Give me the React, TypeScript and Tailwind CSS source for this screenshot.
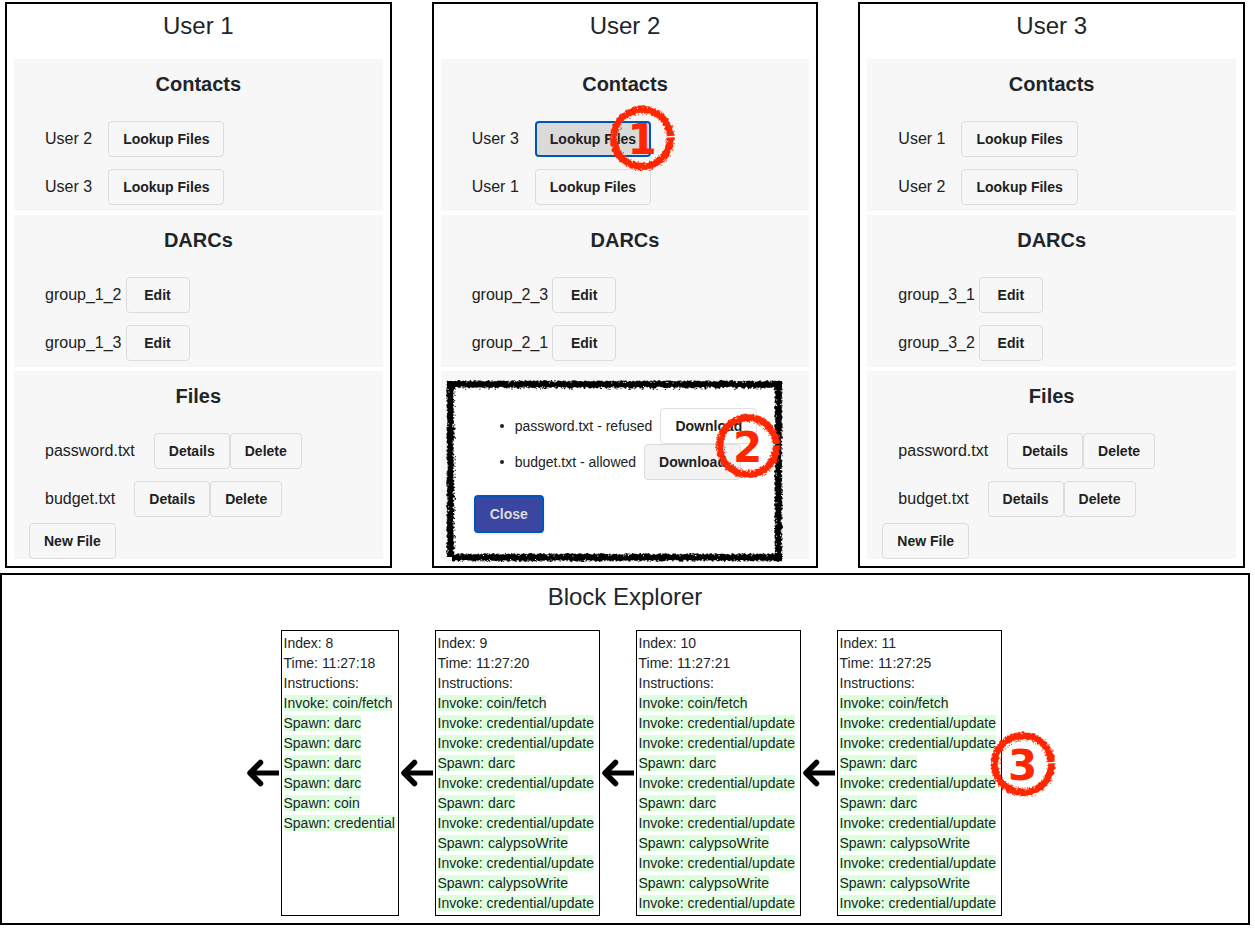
import React from "react";

type Tone = "plain" | "pressed" | "raised" | "shaded" | "primary";

const TONES: Record<Tone, string> = {
  plain: "h-9 border px-3.5 border-[#dcdcdc] bg-transparent text-[#212121]",
  pressed: "h-9 border-2 px-[13px] border-[#0056b8] bg-[#dadada] text-[#212121]",
  raised: "h-9 border px-3.5 border-[#e0e0e0] bg-white text-[#212121]",
  shaded: "h-9 border px-3.5 border-[#dadada] bg-[#f3f3f3] text-[#212121]",
  primary: "h-[38px] border-2 px-3.5 border-[#0056b8] bg-[#3a46a0] text-[#dcdcdc] shadow-sm",
};

function Button({ tone = "plain", children }: { tone?: Tone; children: React.ReactNode }) {
  return (
    <button
      type="button"
      className={`min-w-16 shrink-0 cursor-pointer rounded text-center text-sm font-bold whitespace-nowrap ${TONES[tone]}`}
    >
      {children}
    </button>
  );
}

function createRandom(seed: number) {
  let state = seed;
  return () => {
    state = (state * 1664525 + 1013904223) % 4294967296;
    return state / 4294967296;
  };
}

const fmt = (n: number) => n.toFixed(1);

/* Chalk-like ring: jagged inner and outer edge, with loose grains around it. */
function chalkRing(seed: number) {
  const rnd = createRandom(seed);
  const steps = 150;
  const start = -0.02;
  const sweep = Math.PI * 2 - 0.05;
  const outer: string[] = [];
  const inner: string[] = [];
  const at = (a: number, r: number) => `${fmt(33 + r * Math.cos(a))} ${fmt(33 + r * Math.sin(a))}`;
  for (let i = 0; i <= steps; i++) {
    const a = start + (sweep * i) / steps;
    outer.push(at(a, 31.2 + rnd() * 1.8));
    inner.unshift(at(a, 25.8 - rnd() * 2));
  }
  const grains: string[] = [];
  for (let i = 0; i < 70; i++) {
    const a = start + sweep * rnd();
    const r = rnd() < 0.5 ? 23.2 + rnd() : 32.3 + rnd() * 0.7;
    grains.push(`M${at(a, r)}h1v1h-1z`);
  }
  const chips: string[] = [];
  for (let i = 0; i < 30; i++) {
    const a = start + sweep * rnd();
    const r = rnd() < 0.5 ? 25 + rnd() : 30.5 + rnd();
    chips.push(`M${at(a, r)}v1h1v-1z`);
  }
  return `M${outer.join("L")}L${inner.join("L")}Z${grains.join("")}${chips.join("")}`;
}

/* Charcoal frame built from four rough bands, in a w by h box. */
function charcoalFrame(w: number, h: number) {
  const rnd = createRandom(77);
  const parts: string[] = [];
  const band = (x0: number, y0: number, length: number, vertical: boolean) => {
    const near: string[] = [];
    const far: string[] = [];
    const put = (along: number, across: number) =>
      vertical ? `${fmt(x0 + across)} ${fmt(y0 + along)}` : `${fmt(x0 + along)} ${fmt(y0 + across)}`;
    for (let t = 0; t <= length; t += 1) {
      near.push(put(t, rnd() * 1.9));
      far.unshift(put(t, 9 - rnd() * 2.4));
    }
    const outline = [...near, ...far];
    /* Keep every band wound the same way so that the corners stay filled. */
    if (vertical) outline.reverse();
    parts.push(`M${outline.join("L")}Z`);
    for (let i = 0; i < length / 3; i++) {
      parts.push(`M${put(rnd() * length, rnd() < 0.5 ? rnd() : 8 + rnd())}h1v1h-1z`);
    }
  };
  band(1, 0, w - 2, false);
  band(6, h - 9, w - 7, false);
  band(0, 1, h - 6, true);
  band(w - 9, 1, h - 2, true);
  return parts.join("");
}

function charcoalChips(w: number, h: number) {
  const rnd = createRandom(9);
  const parts: string[] = [];
  for (let i = 0; i < 110; i++) {
    const y = rnd() < 0.5 ? 1 + rnd() * 1.5 : 6 + rnd() * 1.5;
    const offset = rnd() < 0.5 ? 0 : h - 9;
    parts.push(`M${fmt(8 + rnd() * (w - 18))} ${fmt(offset + y)}h1v1h-1z`);
  }
  for (let i = 0; i < 70; i++) {
    const x = rnd() < 0.5 ? 1 + rnd() * 1.5 : 6 + rnd() * 1.5;
    const offset = rnd() < 0.5 ? 0 : w - 9;
    parts.push(`M${fmt(offset + x)} ${fmt(8 + rnd() * (h - 18))}h1v1h-1z`);
  }
  return parts.join("");
}

function Marker({ label, className }: { label: string; className: string }) {
  return (
    <span
      className={`pointer-events-none absolute z-10 flex size-[66px] items-center justify-center pt-1 text-[#ff2600] ${className}`}
    >
      <svg viewBox="0 0 66 66" className="absolute inset-0 size-full" aria-hidden="true">
        <path d={chalkRing(label.charCodeAt(0) * 31)} fill="currentColor" fillRule="evenodd" />
      </svg>
      <span className="relative font-['DejaVu_Sans',sans-serif] text-[42px] leading-none font-bold">{label}</span>
    </span>
  );
}

function Section({ title, grow, children }: { title: string; grow?: boolean; children?: React.ReactNode }) {
  return (
    <section className={`bg-[#f7f7f7] ${grow ? "flex-1" : ""}`}>
      <h3 className="pt-[13px] pb-[19px] text-center text-xl leading-6 font-bold">{title}</h3>
      {children}
    </section>
  );
}

const ROW_GAPS = { tight: "gap-1", normal: "gap-4", wide: "gap-[19px]" };

function Row({
  label,
  spacing = "normal",
  children,
}: {
  label: string;
  spacing?: keyof typeof ROW_GAPS;
  children: React.ReactNode;
}) {
  return (
    <li className={`flex h-12 items-center pl-[31px] text-base text-[#212121] ${ROW_GAPS[spacing]}`}>
      <span>{label}</span>
      <div className="flex">{children}</div>
    </li>
  );
}

function DownloadDialog() {
  return (
    <div
      role="dialog"
      aria-label="Lookup Files"
      className="absolute top-[376px] left-3 w-[337px] bg-white pt-7 pb-[29px] pl-7 text-sm text-[#212121]"
    >
      <svg viewBox="0 0 337 182" preserveAspectRatio="none" className="absolute inset-0 size-full" aria-hidden="true">
        <path d="M0 0H337V182H0ZM4 4V178H333V4Z" fill="#f7f7f7" fillRule="evenodd" />
        <path d={charcoalFrame(337, 182)} fill="#000" />
        <path d={charcoalChips(337, 182)} fill="#fff" />
      </svg>
      <ul className="relative list-disc pl-[41px]">
        <li>
          <span className="inline-flex items-center gap-2 align-middle">
            password.txt - refused <Button tone="raised">Download</Button>
          </span>
        </li>
        <li>
          <span className="inline-flex items-center gap-2 align-middle">
            budget.txt - allowed <Button tone="shaded">Download</Button>
          </span>
        </li>
      </ul>
      <div className="relative mt-[15px] flex">
        <Button tone="primary">Close</Button>
      </div>
      <Marker label="2" className="top-[33px] right-0.5" />
    </div>
  );
}

interface User {
  name: string;
  contacts: string[];
  darcs: string[];
  files: string[];
  lookedUp?: string;
}

const USERS: User[] = [
  { name: "User 1", contacts: ["User 2", "User 3"], darcs: ["group_1_2", "group_1_3"], files: ["password.txt", "budget.txt"] },
  { name: "User 2", contacts: ["User 3", "User 1"], darcs: ["group_2_3", "group_2_1"], files: [], lookedUp: "User 3" },
  { name: "User 3", contacts: ["User 1", "User 2"], darcs: ["group_3_1", "group_3_2"], files: ["password.txt", "budget.txt"] },
];

function UserPanel({ user }: { user: User }) {
  return (
    <article className="relative flex flex-col border-2 border-black px-[7px] pb-[7px]">
      <h2 className="pt-1.5 pb-[17px] text-center text-2xl leading-8">{user.name}</h2>
      <div className="flex flex-1 flex-col gap-1">
        <Section title="Contacts">
          <ul>
            {user.contacts.map((contact) => (
              <Row key={contact} label={contact}>
                {contact === user.lookedUp ? (
                  <div className="relative flex">
                    <Button tone="pressed">Lookup Files</Button>
                    <Marker label="1" className="-top-4 -right-6" />
                  </div>
                ) : (
                  <Button>Lookup Files</Button>
                )}
              </Row>
            ))}
          </ul>
        </Section>
        <Section title="DARCs">
          <ul>
            {user.darcs.map((darc) => (
              <Row key={darc} label={darc} spacing="tight">
                <Button>Edit</Button>
              </Row>
            ))}
          </ul>
        </Section>
        {user.lookedUp ? (
          <div className="flex-1 bg-[#f7f7f7]" />
        ) : (
          <Section title="Files" grow>
            <ul>
              {user.files.map((file) => (
                <Row key={file} label={file} spacing="wide">
                  <Button>Details</Button>
                  <Button>Delete</Button>
                </Row>
              ))}
            </ul>
            <div className="flex pl-[15px]">
              <Button>New File</Button>
            </div>
          </Section>
        )}
      </div>
      {user.lookedUp && <DownloadDialog />}
    </article>
  );
}

interface Block {
  index: number;
  time: string;
  instructions: string[];
}

const UPDATE = "Invoke: credential/update";
const DARC = "Spawn: darc";
const WRITE = "Spawn: calypsoWrite";
const FETCH = "Invoke: coin/fetch";
const SHARING = [FETCH, UPDATE, UPDATE, DARC, UPDATE, DARC, UPDATE, WRITE, UPDATE, WRITE, UPDATE];

const BLOCKS: Block[] = [
  { index: 8, time: "11:27:18", instructions: [FETCH, DARC, DARC, DARC, DARC, "Spawn: coin", "Spawn: credential"] },
  { index: 9, time: "11:27:20", instructions: SHARING },
  { index: 10, time: "11:27:21", instructions: SHARING },
  { index: 11, time: "11:27:25", instructions: SHARING },
];

function Arrow() {
  return (
    <svg viewBox="0 0 32 28" className="mx-0.5 h-7 w-8 shrink-0 self-center" fill="none" stroke="#000" aria-hidden="true">
      <path d="M32 14H4" strokeWidth="5" />
      <path d="M13.500 3.500L3 14L13.500 24.500" strokeWidth="5.500" strokeLinecap="round" strokeLinejoin="round" />
    </svg>
  );
}

function BlockCard({ block, children }: { block: Block; children?: React.ReactNode }) {
  const width = block.instructions.includes(UPDATE) ? "min-w-[165px]" : "min-w-[118px]";
  return (
    <div className={`relative border border-black p-0.5 text-sm leading-5 whitespace-nowrap ${width}`}>
      <div>Index: {block.index}</div>
      <div>Time: {block.time}</div>
      <div>Instructions:</div>
      <ul>
        {block.instructions.map((instruction, i) => (
          <li key={i}>
            <span className="bg-[#ddffdd]">{instruction}</span>
          </li>
        ))}
      </ul>
      {children}
    </div>
  );
}

export default function App() {
  return (
    <main className="bg-white pt-0.5 pr-[5px] font-['Liberation_Sans',Arial,sans-serif] text-[#212529]">
      <div className="grid grid-cols-3 gap-10 px-[5px]">
        {USERS.map((user) => (
          <UserPanel key={user.name} user={user} />
        ))}
      </div>
      <section className="mt-[5px] border-2 border-black pb-[7px]">
        <h2 className="pt-1.5 pb-[17px] text-center text-2xl leading-8">Block Explorer</h2>
        <div className="flex justify-center pr-1">
          {BLOCKS.map((block) => (
            <div key={block.index} className="flex">
              <Arrow />
              <BlockCard block={block}>
                {block.index === 11 && <Marker label="3" className="top-[100px] -right-[55px]" />}
              </BlockCard>
            </div>
          ))}
        </div>
      </section>
    </main>
  );
}
